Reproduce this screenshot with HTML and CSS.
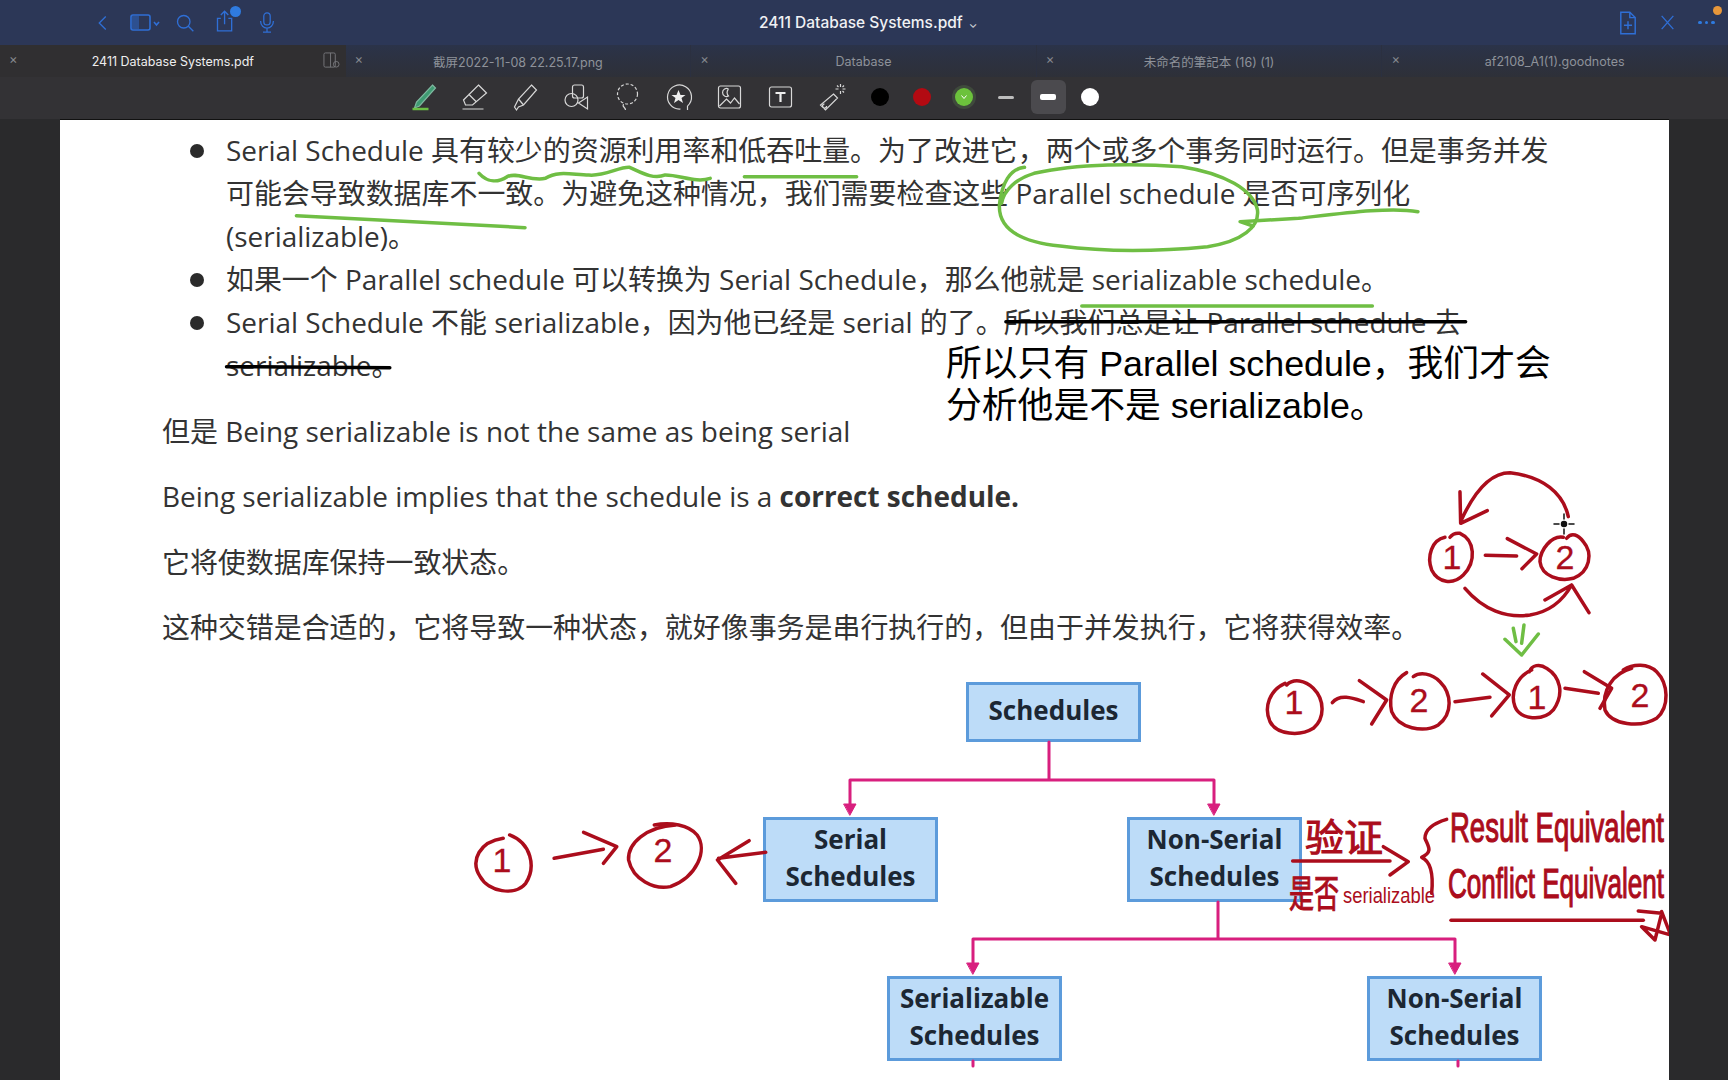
FILE: index.html
```html
<!DOCTYPE html>
<html lang="zh-CN">
  <head>
    <meta charset="UTF-8" />
    <meta name="viewport" content="width=device-width, initial-scale=1.0" />
    <title>2411 Database Systems.pdf</title>
    <link rel="stylesheet" href="styles.css">
  </head>
  <body>
    <!-- top bar -->
    <header class="titlebar">
      <div class="title-left">
        <svg class="icon back" viewBox="0 0 16 24"><path d="M12 4 L4 12 L12 20" /></svg>
        <svg class="icon sidebar" viewBox="0 0 30 20"><rect x="1" y="2" width="19" height="15" rx="2" /><rect class="fill-dim" x="2" y="3" width="7" height="13" /><path d="M24 9 L26.5 12 L29 9" /></svg>
        <svg class="icon search" viewBox="0 0 24 24"><circle cx="10.5" cy="10.5" r="7.5" /><path d="M16 16 L22 22" /></svg>
        <span class="share">
          <svg class="icon" viewBox="0 0 24 26"><path d="M7 10 H3 V25 H20 V10 H16 M11.500 17 V2 M7 6 L11.500 1.500 L16 6" /></svg>
          <span class="share-badge"></span>
        </span>
        <svg class="icon mic" viewBox="0 0 20 26"><rect x="6" y="1" width="8" height="15" rx="4" /><path d="M2 11 C2 23 18 23 18 11 M10 20 V25 M5 25 H15" /></svg>
      </div>
      <div class="doc-title">2411 Database Systems.pdf <span class="caret">⌄</span></div>
      <div class="title-right">
        <svg class="icon" viewBox="0 0 20 26"><path d="M12 1 H2 V25 H18 V7 Z M12 1 V7 H18 M10 11 V20 M5.500 15.500 H14.500" /></svg>
        <svg class="icon close-x" viewBox="0 0 18 20"><path d="M2 2 L16 18 M16 2 L2 18" /></svg>
        <span class="more">
          <span class="dots"><i></i><i></i><i></i></span>
          <span class="more-badge"></span>
        </span>
      </div>
    </header>

    <!-- tabs -->
    <nav class="tabs">
      <div class="tab active">
        <span class="tab-x">×</span>
        <span class="tab-name">2411 Database Systems.pdf</span>
        <svg class="tab-split" viewBox="0 0 18 18"><rect x="1" y="1" width="12" height="15" rx="1.500" /><path d="M8 1 V16" /><circle cx="14" cy="13" r="3" /></svg>
      </div>
      <div class="tab"><span class="tab-x">×</span><span class="tab-name">截屏2022-11-08 22.25.17.png</span></div>
      <div class="tab"><span class="tab-x">×</span><span class="tab-name">Database</span></div>
      <div class="tab"><span class="tab-x">×</span><span class="tab-name">未命名的筆記本 (16) (1)</span></div>
      <div class="tab"><span class="tab-x">×</span><span class="tab-name">af2108_A1(1).goodnotes</span></div>
    </nav>

    <!-- drawing tools -->
    <div class="toolbar">
      <div class="tools">
        <svg class="tool" viewBox="0 0 30 30"><path class="pen-body" d="M24 3 L27 6 L11 24 L6 26 L8 20 Z" /><path class="pen-line" d="M4 27 H20" /></svg>
        <svg class="tool" viewBox="0 0 30 30"><path d="M19 3 L27 11 L13 23 L6 23 L4 18 Z M9 12 L17 20 M3 27 H24" /></svg>
        <svg class="tool" viewBox="0 0 30 30"><path d="M21 3 L26 8 L13 23 L8 25 L6 28 L4 25 L6 21 L8 17 Z M8 17 L13 23" /></svg>
        <svg class="tool" viewBox="0 0 30 30"><rect x="11" y="3" width="11" height="13" rx="2" /><circle cx="10" cy="18" r="6.500" /><path d="M26 15 V27 L17 21 Z" /></svg>
        <svg class="tool" viewBox="0 0 30 30"><circle class="dashed" cx="15" cy="12" r="10" /><path d="M11 22 C9 25 13 25 13 28" /></svg>
        <svg class="tool" viewBox="0 0 30 30"><path d="M24 24 A12 12 0 1 0 17 27 M24 24 L24 28" /><path class="fill-white" d="M15 8 L17 13 L22 13 L18 16 L19.500 21 L15 18 L10.500 21 L12 16 L8 13 L13 13 Z" /></svg>
        <svg class="tool" viewBox="0 0 30 30"><rect x="4" y="4" width="22" height="22" rx="2" /><path d="M5 24 L12 17 L16 21 L20 16 L25 22 M14 7 A4 4 0 1 0 14 14 A5 5 0 0 1 14 7" /></svg>
        <svg class="tool" viewBox="0 0 30 30"><rect x="4" y="5" width="22" height="20" rx="2" /><path class="thick" d="M10 11 H20 M15 11 V20" /></svg>
        <svg class="tool" viewBox="0 0 30 30"><path d="M17 12 L21 16 L9 28 L4 23 Z M8 22 A2 2 0 1 0 10.100 24 M24 2 V5 M24 9 V12 M19 7 H22 M26 7 H29 M20.500 3.500 L22 5 M27.500 3.500 L26 5 M27.500 10.500 L26 9" /></svg>
      </div>
      <div class="swatches">
        <span class="swatch-cell"><i class="dot black"></i></span>
        <span class="swatch-cell"><i class="dot red"></i></span>
        <span class="swatch-cell"><i class="dot green"><svg class="dot-check" viewBox="0 0 8 6"><path d="M1.500 1.500 L4 4.500 L6.500 1.500" /></svg></i></span>
        <span class="swatch-cell"><i class="dash thin"></i></span>
        <span class="swatch-cell selected"><i class="dash wide"></i></span>
        <span class="swatch-cell"><i class="dot white"></i></span>
      </div>
    </div>

    <!-- pdf page -->
    <main class="viewer">
      <div class="page">
        <ul class="notes">
          <li>Serial Schedule 具有较少的资源利用率和低吞吐量。为了改进它，两个或多个事务同时运行。但是事务并发<br>可能会导致数据库不一致。为避免这种情况，我们需要检查这些 Parallel schedule 是否可序列化<br>(serializable)。</li>
          <li>如果一个 Parallel schedule 可以转换为 Serial Schedule，那么他就是 serializable schedule。</li>
          <li>Serial Schedule 不能 serializable，因为他已经是 serial 的了。所以我们总是让 Parallel schedule 去<br>serializable。</li>
        </ul>
        <p>但是 Being serializable is not the same as being serial</p>
        <p>Being serializable implies that the schedule is a <b>correct schedule.</b></p>
        <p>它将使数据库保持一致状态。</p>
        <p>这种交错是合适的，它将导致一种状态，就好像事务是串行执行的，但由于并发执行，它将获得效率。</p>

        <!-- schedule tree -->
        <div class="node node-root">Schedules</div>
        <div class="node node-serial">Serial<br>Schedules</div>
        <div class="node node-nonserial">Non-Serial<br>Schedules</div>
        <div class="node node-serializable">Serializable<br>Schedules</div>
        <div class="node node-nonserial2">Non-Serial<br>Schedules</div>

        <div class="typed-note">所以只有 Parallel schedule，我们才会<br>分析他是不是 serializable。</div>

        <!-- connectors and handwriting, in window coordinates -->
        <svg class="ink" viewBox="60 119 1609 961">
          <g class="links">
            <path d="M1049 742 V780 M850 780 H1214 M850 780 V804 M1214 780 V804" />
            <path d="M1218 902 V939 M973 939 H1455 M973 939 V963 M1455 939 V963" />
            <path d="M973 1061 V1066 M1458 1061 V1066" />
            <path class="head" d="M844 804 H856 L850 815 Z M1208 804 H1220 L1214 815 Z M967 963 H979 L973 974 Z M1449 963 H1461 L1455 974 Z" />
          </g>

          <!-- green marks -->
          <g class="green" transform="translate(150 120) scale(.5102 .3333)">
            <path d="M645 160 C660 185 680 190 700 170 C720 155 745 185 775 175 C800 150 830 165 860 165 C890 170 920 140 940 142 C960 155 985 180 1010 165 C1040 165 1070 190 1098 175" />
            <path d="M1165 170 L1385 170" />
            <path d="M287 287 L735 323" />
          </g>
          <g class="green" transform="translate(930 120) scale(.4337 .3333)">
            <path d="M218 142 C185 145 165 190 160 255 C158 320 200 365 300 378 C400 395 520 395 640 380 C720 365 760 320 755 270 C745 210 680 160 580 140 C480 130 340 130 240 160 C200 175 170 210 165 250" />
            <path d="M1125 275 C1060 260 950 280 850 295 L715 305 L745 318" />
            <path d="M350 558 L1020 558" />
          </g>
          <g class="green" transform="translate(1250 450) scale(.3333)">
            <path d="M790 535 L798 575 M822 525 L815 580 M765 568 L815 615 L865 552" />
          </g>

          <!-- black strikes -->
          <g class="strike" transform="translate(930 120) scale(.4337 .3333)"><path d="M175 605 L1235 605" /></g>
          <g class="strike" transform="translate(150 120) scale(.5102 .3333)"><path d="M150 740 L470 743" /></g>

          <!-- cycle drawing -->
          <g class="red" transform="translate(1250 450) scale(.3333)">
            <path d="M955 200 C940 130 880 80 780 68 C720 68 670 130 632 215 M630 125 L632 220 L712 182" />
            <path d="M585 262 C545 270 530 320 545 360 C565 400 610 405 640 375 C680 335 675 270 630 250 C615 248 605 255 600 262" />
            <path d="M706 316 L800 318 M772 266 L860 312 L816 356" />
            <path d="M940 262 C905 255 870 300 870 335 C875 380 930 395 970 385 C1020 365 1030 310 1000 275 C985 255 965 245 950 265" />
            <path d="M645 415 C700 480 770 505 840 495 C900 485 940 450 965 405 M885 450 L965 405 L1017 488" />
            <path d="M105 700 C60 720 40 770 60 815 C80 855 150 860 190 835 C225 805 225 750 190 715 C165 690 130 685 110 705" />
            <path d="M247 758 C270 730 310 745 340 755 M328 692 L410 750 L365 822" />
            <path d="M470 668 C430 690 415 740 425 785 C445 835 520 850 565 825 C610 790 605 730 570 695 C545 670 510 665 490 680" />
            <path d="M615 755 L720 742 M698 672 L778 735 L725 798" />
            <path d="M845 660 C800 680 780 730 795 770 C810 810 880 815 910 780 C945 730 930 680 890 655 C870 640 845 645 838 665" />
            <path d="M945 715 L1045 730 M1003 665 L1085 715 L1050 775" />
            <path d="M1145 655 C1090 670 1055 720 1065 780 C1085 825 1170 835 1220 805 C1260 770 1255 700 1220 665 C1195 640 1150 640 1120 660" />
          </g>
          <g class="red-text digit">
            <text x="1452" y="569">1</text>
            <text x="1565" y="569">2</text>
            <text x="1294" y="714">1</text>
            <text x="1419" y="712">2</text>
            <text x="1537" y="709">1</text>
            <text x="1640" y="707">2</text>
            <text x="502" y="872">1</text>
            <text x="663" y="862">2</text>
          </g>

          <!-- left of Serial Schedules -->
          <g class="red" transform="translate(440 670) scale(.5357 .3333)">
            <path d="M118 505 C75 515 55 570 75 620 C90 665 140 680 160 640 C180 590 170 520 130 495" />
            <path d="M213 565 L305 538 M268 487 L330 530 L305 580" />
            <path d="M440 465 C385 470 350 520 352 570 C360 630 400 660 430 650 C480 620 500 540 480 495 C465 465 430 455 400 465" />
            <path d="M608 547 L520 565 M577 512 L518 570 L552 640" />
          </g>

          <!-- equivalence note -->
          <g class="red" transform="translate(1250 780) scale(.3333)">
            <path d="M128 243 L420 243 M400 200 L475 245 L420 285" />
            <path d="M590 118 C550 130 525 150 525 175 C535 200 550 215 515 232 C545 245 550 290 545 340" />
            <path d="M603 421 L1180 421" />
            <path d="M1165 393 L1235 400 L1215 480 L1175 440 L1262 465 L1235 395" />
          </g>
          <text class="red-text hand-cn" x="1305" y="851" textLength="78" lengthAdjust="spacingAndGlyphs">验证</text>
          <text class="red-text hand-cn" x="1289" y="907" textLength="50" lengthAdjust="spacingAndGlyphs">是否</text>
          <text class="red-text hand-small" x="1343" y="903" textLength="92" lengthAdjust="spacingAndGlyphs">serializable</text>
          <text class="red-text hand-en" x="1450" y="842" textLength="214" lengthAdjust="spacingAndGlyphs">Result Equivalent</text>
          <text class="red-text hand-en" x="1448" y="898" textLength="216" lengthAdjust="spacingAndGlyphs">Conflict Equivalent</text>

          <!-- pointer -->
          <g class="cursor">
            <circle cx="1564" cy="524" r="2.500" />
            <path d="M1564 514 V519 M1564 529 V534 M1554 524 H1559 M1569 524 H1574" />
          </g>
        </svg>
      </div>
    </main>
  </body>
</html>
```

FILE: styles.css
```css
* {
  box-sizing: border-box;
}
body {
  margin: 0;
  width: 1728px;
  height: 1080px;
  overflow: hidden;
  display: flex;
  flex-direction: column;
  background-color: #2a2a2c;
  font-family: "Open Sans", "Noto Sans CJK SC", sans-serif;
}

/* top bar */
.titlebar {
  height: 45px;
  display: flex;
  align-items: center;
  justify-content: space-between;
  position: relative;
  padding: 0 10px 0 96px;
  background-color: #2c3757;
}
.icon {
  display: block;
  fill: none;
  stroke: #2f6fd6;
  stroke-width: 1.6;
}
.title-left {
  display: flex;
  align-items: center;
  gap: 20px;
}
.back {
  width: 13px;
  height: 22px;
}
.sidebar {
  width: 30px;
  height: 20px;
  margin-left: 1px;
}
.fill-dim {
  fill: #2f6fd6;
  fill-opacity: 0.45;
  stroke: none;
}
.search {
  width: 20px;
  height: 20px;
  margin-left: -5px;
}
.share {
  position: relative;
  display: block;
  width: 20px;
  height: 23px;
  margin: -2px 0 0 0;
}
.share-badge {
  position: absolute;
  right: -6px;
  top: -4px;
  width: 11px;
  height: 11px;
  border-radius: 50%;
  background-color: #2f7be0;
}
.mic {
  width: 16px;
  height: 21px;
  margin-left: 4px;
}
.doc-title {
  position: absolute;
  left: 759px;
  top: 13px;
  color: #f0f1f4;
  font-family: Inter, "Noto Sans CJK SC", sans-serif;
  font-size: 15.500px;
  font-weight: 500;
  line-height: 20px;
  white-space: nowrap;
}
.caret {
  font-size: 11px;
  color: #c9ccd4;
  margin-left: 2px;
}
.title-right {
  display: flex;
  align-items: center;
  gap: 23px;
}
.title-right > svg:first-child {
  width: 18px;
  height: 24px;
}
.close-x {
  width: 15px;
  height: 17px;
}
.more {
  position: relative;
  display: block;
  width: 20px;
  height: 20px;
}
.dots {
  display: flex;
  gap: 3px;
  padding-top: 8px;
}
.dots i {
  width: 3.500px;
  height: 3.500px;
  border-radius: 50%;
  background-color: #2f7be0;
}
.more-badge {
  position: absolute;
  right: -4px;
  top: -7px;
  width: 9px;
  height: 9px;
  border-radius: 50%;
  background-color: #e8973a;
}

/* tabs */
.tabs {
  height: 32px;
  display: grid;
  grid-template-columns: repeat(5, 1fr);
  background: linear-gradient(#2b3349, #2e3038);
}
.tab {
  position: relative;
  display: flex;
  align-items: center;
  justify-content: center;
  border-right: 1px solid #2b3040;
  color: #8e929a;
  font-family: Inter, "Noto Sans CJK SC", sans-serif;
  font-size: 12.500px;
}
.tab.active {
  background-color: #302f31;
  color: #eeeeee;
  border-right: none;
}
.tab-x {
  position: absolute;
  left: 9px;
  top: 6px;
  color: #85888e;
  font-size: 13px;
}
.tab-split {
  position: absolute;
  right: 6px;
  top: 7px;
  width: 17px;
  height: 17px;
  fill: none;
  stroke: #77787c;
  stroke-width: 1;
}

/* drawing tools */
.toolbar {
  height: 42px;
  display: flex;
  align-items: center;
  padding: 0 0 2px 398px;
  background-color: #333235;
}
.tools {
  display: flex;
  width: 461px;
}
.tool {
  flex: 0 0 51px;
  height: 30px;
  fill: none;
  stroke: #d8d8d8;
  stroke-width: 1.200;
}
.pen-body {
  fill: #3f9a72;
  stroke: #7fb8a0;
}
.pen-line {
  stroke: #6bbf45;
  stroke-width: 2.500;
}
.dashed {
  stroke-dasharray: 3 2;
}
.fill-white {
  fill: #eeeeee;
  stroke: none;
}
.thick {
  stroke: #eeeeee;
  stroke-width: 2.200;
}
.swatches {
  display: flex;
  align-items: center;
}
.swatch-cell {
  width: 42px;
  height: 34px;
  display: flex;
  align-items: center;
  justify-content: center;
}
.swatch-cell.selected {
  width: 35px;
  margin: 0 3.500px;
  border-radius: 6px;
  background-color: #4b4a4e;
}
.dot {
  display: flex;
  align-items: center;
  justify-content: center;
  width: 18px;
  height: 18px;
  border-radius: 50%;
}
.dot.black {
  background-color: #000000;
}
.dot.red {
  background-color: #b30a12;
}
.dot.green {
  background-color: #6cc23c;
  box-shadow: 0 0 0 3px #3f4a3c;
}
.dot.white {
  background-color: #ffffff;
}
.dot-check {
  width: 8px;
  height: 6px;
  fill: none;
  stroke: #ffffff;
  stroke-width: 1;
}
.dash {
  width: 16px;
  border-radius: 2px;
}
.dash.thin {
  height: 3px;
  background-color: #bdbdbd;
}
.dash.wide {
  height: 6px;
  background-color: #ffffff;
}

/* pdf page */
.viewer {
  flex: 1;
  padding: 0 59px 0 60px;
  min-height: 0;
}
.page {
  position: relative;
  height: 961px;
  overflow: hidden;
  padding: 10px 0 0 102px;
  box-shadow: inset 0 1px 0 #111111;
  background-color: #ffffff;
  color: #333333;
  font-size: 27.950px;
  line-height: 43.100px;
  white-space: nowrap;
}
.page p {
  margin: 22.400px 0 0;
}
.notes {
  margin: 0;
  padding: 0 0 0 64px;
  list-style: none;
}
.notes li {
  position: relative;
}
.notes li::before {
  content: "";
  position: absolute;
  left: -36px;
  top: 15px;
  width: 14px;
  height: 14px;
  border-radius: 50%;
  background-color: #2b2b2b;
}

/* schedule tree */
.node {
  position: absolute;
  display: flex;
  align-items: center;
  justify-content: center;
  width: 175px;
  height: 85px;
  padding-bottom: 4px;
  border: 3px solid #5c9bdb;
  background-color: #bddcf8;
  color: #1c2733;
  font-size: 26px;
  font-weight: 700;
  line-height: 37px;
  text-align: center;
}
.node-root {
  left: 906px;
  top: 563px;
  height: 60px;
}
.node-serial {
  left: 703px;
  top: 698px;
}
.node-nonserial {
  left: 1067px;
  top: 698px;
}
.node-serializable {
  left: 827px;
  top: 857px;
}
.node-nonserial2 {
  left: 1307px;
  top: 857px;
}

.typed-note {
  position: absolute;
  left: 886px;
  top: 225px;
  color: #000000;
  font-family: "Liberation Sans", "Noto Sans CJK SC", sans-serif;
  font-size: 35.800px;
  line-height: 41.500px;
}

/* handwriting layer */
.ink {
  position: absolute;
  left: 0;
  top: 0;
  width: 1609px;
  height: 961px;
  overflow: hidden;
  pointer-events: none;
}
.ink path {
  vector-effect: non-scaling-stroke;
  stroke-linecap: round;
  stroke-linejoin: round;
}
.links {
  fill: none;
  stroke: #d81f7e;
  stroke-width: 3;
}
.links .head {
  fill: #d81f7e;
  stroke-width: 1;
}
.green {
  fill: none;
  stroke: #6fbe44;
  stroke-width: 3.500;
}
.strike {
  fill: none;
  stroke: #000000;
  stroke-width: 3.500;
}
.red {
  fill: none;
  stroke: #ab0d1c;
  stroke-width: 3.500;
}
.red-text {
  fill: #ab0d1c;
  stroke: #ab0d1c;
  font-family: "Liberation Sans", "Noto Sans CJK SC", sans-serif;
}
.digit {
  font-size: 34px;
  stroke-width: 0.300;
  text-anchor: middle;
}
.hand-cn {
  font-size: 38px;
  stroke-width: 1;
}
.hand-small {
  font-size: 22px;
  stroke-width: 0;
}
.hand-en {
  font-size: 42px;
  stroke-width: 1.200;
}
.cursor {
  fill: #111111;
  stroke: #111111;
  stroke-width: 1.500;
}
```
